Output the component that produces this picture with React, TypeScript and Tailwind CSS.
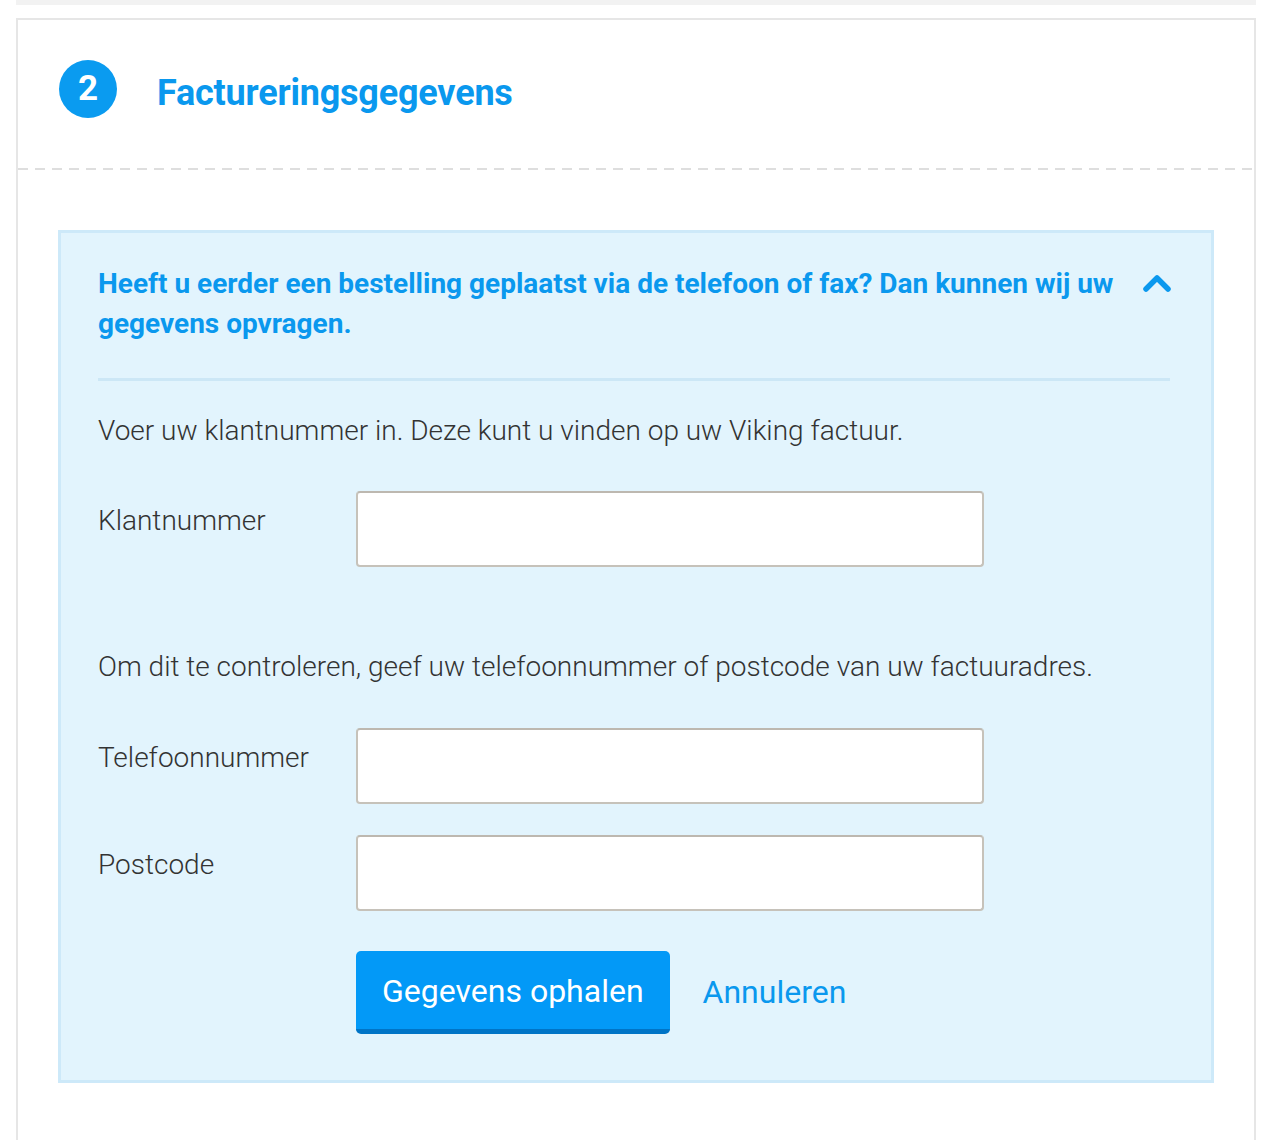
import React from 'react';

const Field = ({ label }: { label: string }) => (
  <div className="flex items-start">
    <label className="w-[258px] shrink-0 pt-[10px] text-[28px] leading-[40px] font-light text-[#333]">{label}</label>
    <input
      type="text"
      className="w-[628px] h-[76px] rounded-[4px] border-2 border-[#c6c2ba] border-t-[#bdb8b0] bg-white px-4 text-[24px] outline-none"
    />
  </div>
);

export default function App() {
  return (
    <div className="min-h-[1140px] bg-white font-['Roboto','Liberation_Sans',sans-serif] overflow-hidden">
      {/* strip of the previous section */}
      <div className="ml-[16px] mr-[18px] h-[5px] bg-[#f2f2f2]" />

      <div className="ml-[16px] mr-[18px] mt-[13px] border-2 border-b-0 border-[#e6e6e6] pb-[120px]">
        {/* Step header */}
        <div className="flex items-center gap-[40px] px-[41px] pt-[40px] pb-[50px]">
          <div className="flex h-[58px] w-[58px] items-center justify-center rounded-full bg-[#0a9bf0] text-[35px] font-bold text-white">
            2
          </div>
          <h2 className="pt-[8px] text-[36px] font-bold leading-[44px] text-[#0a98ee] tracking-[-0.2px]">Factureringsgegevens</h2>
        </div>
        <div className="h-[2px] bg-[repeating-linear-gradient(to_right,#dedede_0_10px,transparent_10px_17px)]" />

        {/* Lookup panel */}
        <div className="mx-[40px] mt-[60px] border-[3px] border-[#cde9f9] bg-[#e2f4fd] pl-[37px] pr-[41px] pt-[31px] pb-[46px]">
          <div className="flex items-start justify-between">
            <p className="w-[1030px] text-[28px] font-bold leading-[40px] text-[#0a98ee]">
              Heeft u eerder een bestelling geplaatst via de telefoon of fax? Dan kunnen wij uw gegevens opvragen.
            </p>
            <svg width="28" height="18" viewBox="0 0 28 18" className="mt-[10px] mr-[-1px]">
              <path d="M3 15 L14 4 L25 15" fill="none" stroke="#0a98ee" strokeWidth="5.5" strokeLinecap="round" strokeLinejoin="round" />
            </svg>
          </div>

          <div className="mt-[34px] h-[3px] bg-[#cce7f6]" />

          <p className="mt-[30px] text-[28px] font-light leading-[40px] text-[#333]">
            Voer uw klantnummer in. Deze kunt u vinden op uw Viking factuur.
          </p>
          <div className="mt-[40px]">
            <Field label="Klantnummer" />
          </div>

          <p className="mt-[80px] text-[28px] font-light leading-[40px] text-[#333]">
            Om dit te controleren, geef uw telefoonnummer of postcode van uw factuuradres.
          </p>
          <div className="mt-[41px] flex flex-col gap-[31px]">
            <Field label="Telefoonnummer" />
            <Field label="Postcode" />
          </div>

          <div className="mt-[40px] flex items-center gap-[33px] pl-[258px]">
            <button className="h-[83px] rounded-[5px] border-b-[5px] border-[#0074c6] bg-[#0399f7] px-[26px] pt-[2px] text-[32px] text-white">
              Gegevens ophalen
            </button>
            <a className="pb-[2px] text-[32px] text-[#0a98ee]">Annuleren</a>
          </div>
        </div>
      </div>
    </div>
  );
}
